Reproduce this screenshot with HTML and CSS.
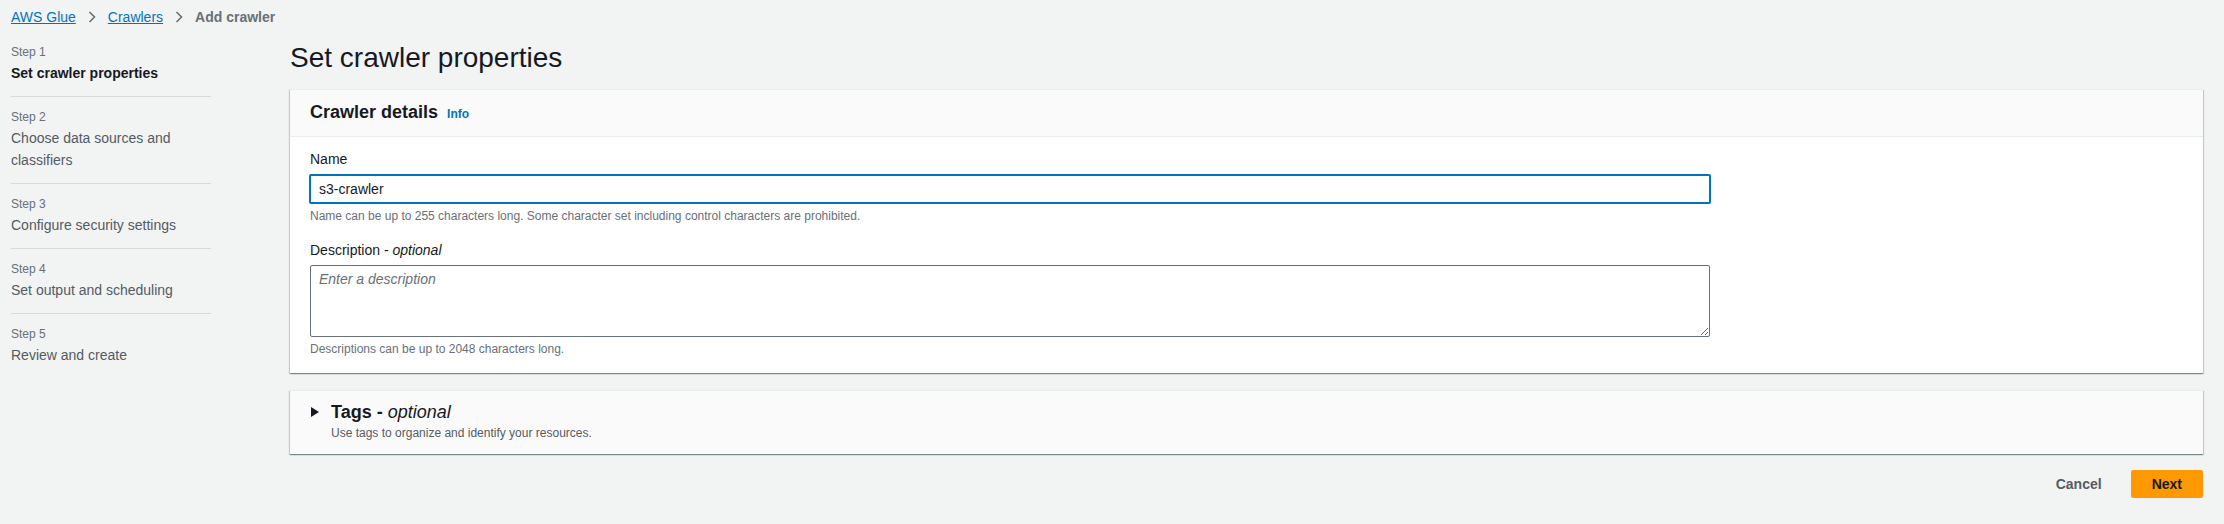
FILE: index.html
```html
<!DOCTYPE html>
<html lang="en">
<head>
<meta charset="utf-8">
<title>Add crawler - AWS Glue</title>
<link rel="stylesheet" href="styles.css">
</head>
<body>
<nav class="breadcrumbs">
  <a class="crumb-link" href="#">AWS Glue</a>
  <svg class="chev" width="8" height="12" viewBox="0 0 8 12"><polyline points="1.5,1 6.5,6 1.5,11" fill="none" stroke="#687078" stroke-width="1.6"/></svg>
  <a class="crumb-link" href="#">Crawlers</a>
  <svg class="chev" width="8" height="12" viewBox="0 0 8 12"><polyline points="1.5,1 6.5,6 1.5,11" fill="none" stroke="#687078" stroke-width="1.6"/></svg>
  <span class="crumb-current">Add crawler</span>
</nav>
<div class="layout">
  <ol class="steps">
    <li class="step active"><div class="step-num">Step 1</div><div class="step-title">Set crawler properties</div></li>
    <li class="step"><div class="step-num">Step 2</div><div class="step-title">Choose data sources and<br>classifiers</div></li>
    <li class="step"><div class="step-num">Step 3</div><div class="step-title">Configure security settings</div></li>
    <li class="step"><div class="step-num">Step 4</div><div class="step-title">Set output and scheduling</div></li>
    <li class="step last"><div class="step-num">Step 5</div><div class="step-title">Review and create</div></li>
  </ol>
  <main class="main">
    <h1 class="page-title">Set crawler properties</h1>
    <section class="panel">
      <div class="panel-header">
        <h2 class="panel-title">Crawler details<a class="info" href="#">Info</a></h2>
      </div>
      <div class="panel-body">
        <div class="field">
          <label class="field-label" for="name">Name</label>
          <input id="name" class="text-input" type="text" value="s3-crawler">
          <div class="hint">Name can be up to 255 characters long. Some character set including control characters are prohibited.</div>
        </div>
        <div class="field field-gap">
          <label class="field-label" for="desc">Description - <i>optional</i></label>
          <textarea id="desc" class="text-area" placeholder="Enter a description"></textarea>
          <div class="hint">Descriptions can be up to 2048 characters long.</div>
        </div>
      </div>
    </section>
    <section class="panel tags-panel">
      <span class="caret"></span>
      <div>
        <h2 class="panel-title">Tags - <i class="opt">optional</i></h2>
        <div class="tags-sub">Use tags to organize and identify your resources.</div>
      </div>
    </section>
    <div class="actions">
      <button class="btn btn-link">Cancel</button>
      <button class="btn btn-primary">Next</button>
    </div>
  </main>
</div>
</body>
</html>
```
FILE: styles.css
```css
* { box-sizing: border-box; }
html, body { margin: 0; padding: 0; }
body {
  background: #f2f3f3;
  font-family: "Liberation Sans", Arial, sans-serif;
  font-size: 14px;
  line-height: 22px;
  color: #16191f;
  width: 2224px;
  height: 524px;
  overflow: hidden;
}
.breadcrumbs {
  height: 34px;
  padding: 6px 11px;
  display: flex;
  align-items: center;
  gap: 12px;
  line-height: 22px;
}
.crumb-link { color: #0073bb; text-decoration: underline; }
.chev { display: block; }
.crumb-current { color: #687078; font-weight: bold; }

.layout {
  display: grid;
  grid-template-columns: 200px 1fr;
  column-gap: 79px;
  padding: 0 21px 0 11px;
}
.steps { list-style: none; margin: 0; padding: 10px 0 0 0; }
.step { padding: 0 0 12px 0; border-bottom: 1px solid #d5dbdb; margin-bottom: 12px; }
.step.last { border-bottom: none; }
.step-num { font-size: 12px; line-height: 16px; color: #687078; margin-bottom: 2px; }
.step-title { font-size: 14px; line-height: 22px; color: #545b64; }
.step.active .step-title { font-weight: bold; color: #16191f; }

.main { min-width: 0; }
.page-title {
  margin: 6px 0 13px 0;
  font-size: 28px;
  line-height: 36px;
  font-weight: normal;
  color: #16191f;
}
.panel {
  background: #ffffff;
  border-top: 1px solid #eaeded;
  box-shadow: 0 1px 1px 0 rgba(0,28,36,.3), 1px 1px 1px 0 rgba(0,28,36,.15), -1px 1px 1px 0 rgba(0,28,36,.15);
}
.panel-header {
  background: #fafafa;
  border-bottom: 1px solid #eaeded;
  height: 47px;
  padding: 11px 20px 0 20px;
}
.panel-title { margin: 0; font-size: 18px; line-height: 22px; height: 22px; font-weight: bold; color: #16191f; }
.info { margin-left: 9px; font-size: 12px; line-height: 1; font-weight: bold; color: #0073bb; text-decoration: none; vertical-align: baseline; }
.panel-body { padding: 11px 20px 16px 20px; }
.field { display: flex; flex-direction: column; }
.field-gap { margin-top: 15px; }
.field-label { font-size: 14px; line-height: 22px; margin-bottom: 4px; color: #16191f; }
.text-input {
  width: 1402px;
  height: 30px;
  margin-left: -1px;
  border: 2px solid #0073bb;
  border-radius: 2px;
  padding: 0 8px;
  font-family: inherit;
  font-size: 14px;
  color: #16191f;
  background: #fff;
  outline: none;
}
.text-area {
  width: 1400px;
  height: 72px;
  border: 1px solid #687078;
  border-radius: 2px;
  padding: 4px 8px;
  font-family: inherit;
  font-size: 14px;
  line-height: 18px;
  color: #16191f;
  background: #fff;
  resize: both;
  display: block;
}
.text-area::placeholder { color: #687078; font-style: italic; }
.hint { margin-top: 4px; font-size: 12px; line-height: 16px; color: #687078; }

.tags-panel {
  margin-top: 17px;
  height: 64px;
  background: #fafafa;
  padding: 10px 20px 0 21px;
  display: flex;
  align-items: flex-start;
  gap: 12px;
}
.caret {
  width: 0; height: 0;
  margin-top: 6px;
  border-top: 5px solid transparent;
  border-bottom: 5px solid transparent;
  border-left: 8px solid #16191f;
}
.opt { font-weight: normal; }
.tags-sub { font-size: 12px; line-height: 16px; margin-top: 2px; color: #545b64; }

.actions { margin-top: 16px; display: flex; justify-content: flex-end; gap: 8px; }
.btn {
  font-family: inherit;
  font-size: 14px;
  line-height: 20px;
  font-weight: bold;
  padding: 3px 20px;
  height: 28px;
  border-radius: 2px;
  border: 1px solid transparent;
  cursor: pointer;
}
.btn-link { background: transparent; color: #545b64; }
.btn-primary { background: #ff9900; border-color: #ff9900; color: #16191f; }
```
